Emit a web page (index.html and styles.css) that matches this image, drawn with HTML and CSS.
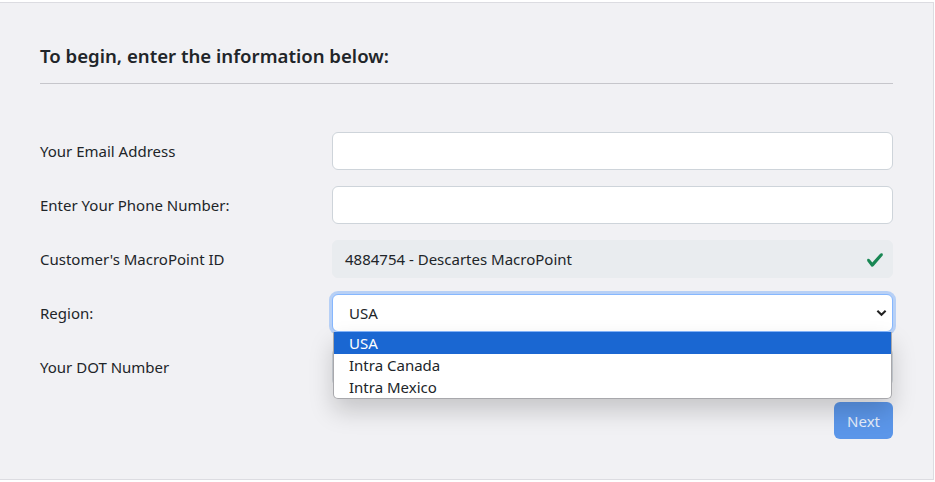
FILE: index.html
```html
<!DOCTYPE html>
<html lang="en">
  <head>
    <meta charset="UTF-8" />
    <meta name="viewport" content="width=device-width, initial-scale=1.0" />
    <title>Carrier Registration</title>
    <link rel="stylesheet" href="styles.css">
  </head>
  <body>
    <main class="panel">
      <h2 class="panel-title">To begin, enter the information below:</h2>
      <hr class="divider" />

      <form class="reg-form">
        <div class="row">
          <label class="row-label">Your Email Address</label>
          <input class="field" type="text" />
        </div>
        <div class="row">
          <label class="row-label">Enter Your Phone Number:</label>
          <input class="field" type="text" />
        </div>
        <div class="row">
          <label class="row-label">Customer's MacroPoint ID</label>
          <div class="field field-readonly">
            <span>4884754 - Descartes MacroPoint</span>
            <svg class="check" viewBox="0 0 8 8" width="18" height="18">
              <path fill="#198754" d="M2.3 6.73.6 4.53c-.4-1.040.46-1.4 1.1-.8l1.1 1.4 3.4-3.8c.6-.63 1.6-.27 1.2.7l-4 4.6c-.43.5-.8.4-1.1.1z"/>
            </svg>
          </div>
        </div>
        <div class="row">
          <label class="row-label">Region:</label>
          <div class="select-wrap">
            <div class="field field-select">
              <span>USA</span>
              <svg class="chevron" viewBox="0 0 12 8" width="11" height="8">
                <path d="M1.5 1.5 6 6l4.5-4.5" fill="none" stroke="#222" stroke-width="2.2"/>
              </svg>
            </div>
            <ul class="options">
              <li class="selected">USA</li>
              <li>Intra Canada</li>
              <li>Intra Mexico</li>
            </ul>
          </div>
        </div>
        <div class="row">
          <label class="row-label">Your DOT Number</label>
          <input class="field" type="text" />
        </div>
        <div class="actions">
          <button type="button" class="btn-next" disabled>Next</button>
        </div>
      </form>
    </main>
  </body>
</html>
```

FILE: styles.css
```css
:root {
  --text-clr: #212529;
  --panel-bg: #f1f1f4;
  --panel-border: #dcdce1;
  --field-border: #ced4da;
  --primary-clr: #0d6efd;
}

body {
  margin: 0;
  background-color: white;
  font-family: "Noto Sans", "Open Sans", sans-serif;
  color: var(--text-clr);
}

.panel {
  margin: 2px 1px 0 0;
  height: 476px;
  background-color: var(--panel-bg);
  border: 1px solid var(--panel-border);
  border-left: none;
  padding: 0 40px;
}

.panel-title {
  margin: 0;
  padding-top: 41px;
  font-size: 18.6px;
  font-weight: 600;
  line-height: 24px;
}

.divider {
  margin: 15px 0 0;
  border: none;
  border-top: 1px solid #c6c6cb;
}

.reg-form {
  margin-top: 48px;
  display: flex;
  flex-direction: column;
  gap: 16px;
}

.row {
  display: grid;
  grid-template-columns: 292px 1fr;
  align-items: center;
}

.row-label {
  font-size: 15px;
}

.field {
  box-sizing: border-box;
  height: 38px;
  width: 100%;
  background-color: white;
  border: 1px solid var(--field-border);
  border-radius: 6px;
  padding: 0 12px;
  font-family: inherit;
  font-size: 15px;
  color: var(--text-clr);
}

.field-readonly {
  display: flex;
  align-items: center;
  justify-content: space-between;
  background-color: #e9ecef;
  border-color: #e9ecef;
  padding-right: 8px;
}

.check {
  margin-top: 1px;
}

.select-wrap {
  position: relative;
}

.field-select {
  display: flex;
  align-items: center;
  justify-content: space-between;
  border-color: #86b7fe;
  box-shadow: 0 0 0 3px rgba(13, 110, 253, 0.25);
  padding: 0 5px 0 16px;
}

.options {
  position: absolute;
  top: 38px;
  left: 1px;
  right: 1px;
  margin: 0;
  padding: 0;
  list-style: none;
  background-color: white;
  border: 1px solid #a8a8ac;
  border-top: none;
  border-radius: 0 0 5px 5px;
  box-shadow: 0 12px 24px rgba(0, 0, 0, 0.18);
  overflow: hidden;
  z-index: 2;

  li {
    height: 22px;
    line-height: 22px;
    padding-left: 15px;
    font-size: 15px;
  }

  .selected {
    background-color: #1a67d2;
    color: white;
  }
}

.actions {
  display: flex;
  justify-content: flex-end;
}

.btn-next {
  height: 37px;
  padding: 0 13px;
  border: none;
  border-radius: 6px;
  background-color: #5b96e9;
  color: #e6eefb;
  font-family: inherit;
  font-size: 15px;
}
```
